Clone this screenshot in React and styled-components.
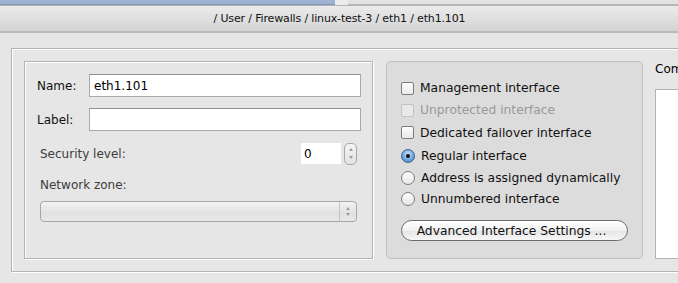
import React from 'react';
import styled, { createGlobalStyle } from 'styled-components';

const Global = createGlobalStyle`
  html, body { margin: 0; padding: 0; background: #e6e6e6; overflow: hidden; }
  body { font-family: "DejaVu Sans", "Liberation Sans", sans-serif; font-size: 12px; color: #000; }
`;

const Page = styled.div`
  width: 678px;
  height: 283px;
  overflow: hidden;
  background: #e6e6e6;
`;

const TopStrip = styled.div`
  display: flex;
  height: 5px;
  background: #ececec;
`;

const TabSeg = styled.div`
  width: ${p => p.w}px;
  margin-right: ${p => p.gap || 0}px;
  background: ${p => p.color};
  border-bottom: 1px solid ${p => p.line};
  box-sizing: border-box;
`;

const Header = styled.div`
  height: 28px;
  box-sizing: border-box;
  border-top: 1px solid #b4b4b4;
  border-bottom: 2px solid #b9b9b9;
  background: linear-gradient(#ebebeb, #d4d4d4);
  display: flex;
  align-items: center;
  justify-content: center;
  padding-left: 1px;
  font-size: 11px;
  color: #111;
  letter-spacing: -0.15px;
`;

const Body = styled.div`
  padding: 15px 0 0 11px;
`;

const Etched = styled.div`
  box-sizing: border-box;
  border: 1px solid #b3b3b3;
  box-shadow: inset 1px 1px 0 #fff, 1px 1px 0 #fff;
`;

const Outer = styled(Etched)`
  width: 700px;
  height: 224px;
  border-right: none;
  padding: 12px;
  display: flex;
  gap: 13px;
`;

const LeftBox = styled(Etched)`
  width: 349px;
  height: 198px;
  padding: 12px 11px 0 12px;
  display: flex;
  flex-direction: column;
`;

const FieldRow = styled.div`
  display: flex;
  align-items: center;
  margin-bottom: 11px;
`;

const FieldLabel = styled.label`
  width: 52px;
  font-size: 12px;
  color: #111;
`;

const TextInput = styled.div`
  box-sizing: border-box;
  flex: 1;
  height: 23px;
  background: #fff;
  border: 1px solid #a9a9a9;
  border-top-color: #8e8e8e;
  padding: 0 4px;
  display: flex;
  align-items: center;
  font-size: 12px;
`;

const Indent = styled.div`
  padding: 0 4px 0 3px;
`;

const SecRow = styled.div`
  display: flex;
  align-items: center;
  height: 23px;
  margin-top: 0;
`;

const MutedLabel = styled.div`
  flex: 1;
  font-size: 12px;
  color: #3c3c3c;
`;

const NumBox = styled.div`
  width: 40px;
  height: 21px;
  background: #fff;
  display: flex;
  align-items: center;
  padding-left: 3px;
  box-sizing: border-box;
  font-size: 12px;
`;

const Spinner = styled.div`
  width: 13px;
  height: 22px;
  margin-left: 3px;
  box-sizing: border-box;
  border: 1px solid #a8a8a8;
  border-radius: 5px;
  background: linear-gradient(#f4f4f4, #e2e2e2);
  display: flex;
  flex-direction: column;
  align-items: center;
  justify-content: space-evenly;
`;

const Arrow = styled.div`
  width: 0;
  height: 0;
  border-left: 2.5px solid transparent;
  border-right: 2.5px solid transparent;
  ${p => (p.down ? 'border-top: 3px solid #9a9a9a;' : 'border-bottom: 3px solid #9a9a9a;')}
`;

const ZoneLabel = styled(MutedLabel)`
  margin-top: 13px;
  flex: none;
`;

const Select = styled.div`
  margin-top: 9px;
  height: 21px;
  box-sizing: border-box;
  border: 1px solid #a6a6a6;
  border-radius: 4px;
  background: linear-gradient(#f3f3f3, #e1e1e1 60%, #e8e8e8);
  display: flex;
  justify-content: flex-end;
`;

const SelectArrows = styled.div`
  width: 16px;
  border-left: 1px solid #c4c4c4;
  display: flex;
  flex-direction: column;
  align-items: center;
  justify-content: center;
  gap: 3px;
`;

const Group = styled.div`
  box-sizing: border-box;
  width: 257px;
  height: 198px;
  border: 1px solid #c0c0c0;
  border-radius: 5px;
  background: #dcdcdc;
  padding: 15px 0 0 14px;
  display: flex;
  flex-direction: column;
`;

const OptRow = styled.div`
  display: flex;
  align-items: center;
  height: ${p => p.h || 22}px;
  gap: 6px;
  font-size: 12.3px;
  color: ${p => (p.disabled ? '#9a9a9a' : '#111')};
`;

const Check = styled.span`
  box-sizing: border-box;
  width: 13px;
  height: 13px;
  border-radius: 2px;
  border: 1px solid ${p => (p.disabled ? '#c2c2c2' : '#7c7c7c')};
  background: ${p => (p.disabled ? '#e8e8e8' : 'linear-gradient(#fdfdfd, #e9e9e9)')};
`;

const Radio = styled.span`
  box-sizing: border-box;
  width: 14px;
  height: 14px;
  border-radius: 50%;
  border: 1px solid ${p => (p.on ? '#3c5f8c' : '#7c7c7c')};
  background: ${p => (p.on
    ? 'radial-gradient(circle at 50% 35%, #c9e2f8, #6aa4db 60%, #3f7fc4)'
    : 'linear-gradient(#fdfdfd, #e6e6e6)')};
  display: flex;
  align-items: center;
  justify-content: center;
  &::after {
    content: '';
    display: ${p => (p.on ? 'block' : 'none')};
    width: 4px;
    height: 4px;
    border-radius: 50%;
    background: #111;
  }
`;

const Button = styled.div`
  margin-top: 11px;
  width: 227px;
  height: 21px;
  box-sizing: border-box;
  border: 1px solid #6c6c6c;
  border-radius: 11px;
  background: linear-gradient(#ffffff, #f2f2f2 50%, #e4e4e4 51%, #f7f7f7);
  display: flex;
  align-items: center;
  justify-content: center;
  font-size: 12.3px;
  color: #111;
  padding-right: 6px;
`;

const CommentCol = styled.div`
  width: 40px;
  display: flex;
  flex-direction: column;
  margin-left: -1px;
`;

const CommentLabel = styled.div`
  height: 16px;
  font-size: 12px;
  margin-top: 1px;
`;

const CommentBox = styled.div`
  margin-top: 11px;
  height: 171px;
  background: #fff;
  border: 1px solid #b3b3b3;
`;

export default function App() {
  return (
    <Page>
      <Global />
      <TopStrip>
        <TabSeg w={335} gap={13} color="#9eb2d2" line="#7f95b8" />
        <TabSeg w={330} color="#e2e2e2" line="#b8b8b8" />
      </TopStrip>
      <Header>/ User / Firewalls / linux-test-3 / eth1 / eth1.101</Header>
      <Body>
        <Outer>
          <LeftBox>
            <FieldRow>
              <FieldLabel>Name:</FieldLabel>
              <TextInput>eth1.101</TextInput>
            </FieldRow>
            <FieldRow>
              <FieldLabel>Label:</FieldLabel>
              <TextInput />
            </FieldRow>
            <Indent>
              <SecRow>
                <MutedLabel>Security level:</MutedLabel>
                <NumBox>0</NumBox>
                <Spinner>
                  <Arrow />
                  <Arrow down />
                </Spinner>
              </SecRow>
              <ZoneLabel>Network zone:</ZoneLabel>
              <Select>
                <SelectArrows>
                  <Arrow />
                  <Arrow down />
                </SelectArrows>
              </Select>
            </Indent>
          </LeftBox>
          <Group>
            <OptRow><Check />Management interface</OptRow>
            <OptRow disabled><Check disabled />Unprotected interface</OptRow>
            <OptRow h={23}><Check />Dedicated failover interface</OptRow>
            <OptRow h={23}><Radio on />Regular interface</OptRow>
            <OptRow h={21}><Radio />Address is assigned dynamically</OptRow>
            <OptRow h={21}><Radio />Unnumbered interface</OptRow>
            <Button>Advanced Interface Settings ...</Button>
          </Group>
          <CommentCol>
            <CommentLabel>Comment:</CommentLabel>
            <CommentBox />
          </CommentCol>
        </Outer>
      </Body>
    </Page>
  );
}
